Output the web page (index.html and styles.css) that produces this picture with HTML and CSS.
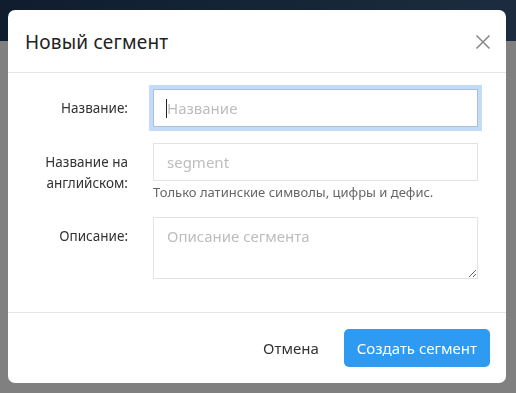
FILE: index.html
```html
<!DOCTYPE html>
<html lang="ru">
<head>
  <meta charset="UTF-8">
  <meta name="viewport" content="width=device-width, initial-scale=1.0">
  <title>Новый сегмент</title>
  <link rel="stylesheet" href="styles.css">
</head>
<body>
  <div class="topbar"></div>

  <div class="backdrop">
    <div class="modal">
      <div class="modal-header">
        <h4 class="modal-title">Новый сегмент</h4>
        <button class="close" aria-label="Закрыть">
          <svg width="16" height="16" viewBox="0 0 16 16">
            <path d="M1.5 1.5 L14.5 14.5 M14.5 1.5 L1.5 14.5" stroke="#8a8a8a" stroke-width="1.6" fill="none"/>
          </svg>
        </button>
      </div>

      <form class="modal-body">
        <label class="form-label" for="name">Название:</label>
        <div class="field">
          <div class="caret-wrap">
            <input class="form-control is-focus" id="name" type="text" placeholder="Название">
            <span class="caret"></span>
          </div>
        </div>

        <label class="form-label" for="slug">Название на английском:</label>
        <div class="field">
          <input class="form-control" id="slug" type="text" placeholder="segment">
          <div class="help">Только латинские символы, цифры и дефис.</div>
        </div>

        <label class="form-label" for="descr">Описание:</label>
        <div class="field">
          <textarea class="form-control textarea" id="descr" placeholder="Описание сегмента"></textarea>
        </div>
      </form>

      <div class="modal-footer">
        <button class="btn btn-link" type="button">Отмена</button>
        <button class="btn btn-primary" type="button">Создать сегмент</button>
      </div>
    </div>
  </div>
</body>
</html>
```

FILE: styles.css
```css
* {
  box-sizing: border-box;
}

body {
  margin: 0;
  background-color: #808080;
  font-family: "Noto Sans", "Open Sans", Arial, sans-serif;
  color: #333;
}

.topbar {
  height: 41px;
  background: linear-gradient(90deg, #0f1d2d, #1c2c3e);
}

.backdrop {
  position: fixed;
  top: 0;
  left: 0;
  right: 0;
  bottom: 0;
  padding: 10px 10px 0 8px;
}

.modal {
  width: 498px;
  height: 373px;
  background-color: #fff;
  border-radius: 7px;
  display: flex;
  flex-direction: column;
}

.modal-header {
  height: 63px;
  display: flex;
  align-items: center;
  justify-content: space-between;
  padding: 0 15px 0 17px;
  border-bottom: 1px solid #e5e5e5;
}

.modal-title {
  margin: 0;
  font-size: 19px;
  font-weight: normal;
  color: #222;
  padding-top: 2px;
  letter-spacing: 0.2px;
}

.close {
  background: none;
  border: none;
  padding: 0;
  width: 16px;
  height: 16px;
  margin-top: 2px;
  cursor: pointer;
}

.modal-body {
  flex: 1;
  margin: 0;
  padding: 16px 28px 16px 16px;
  display: grid;
  grid-template-columns: 104px 325px;
  column-gap: 25px;
  row-gap: 16px;
  align-content: start;
}

.form-label {
  text-align: right;
  font-size: 13.5px;
  line-height: 21px;
  padding-top: 9px;
  color: #333;
}

.caret-wrap {
  position: relative;
}

.form-control {
  display: block;
  width: 100%;
  height: 38px;
  padding: 7px 13px;
  font-family: inherit;
  font-size: 15px;
  color: #333;
  background-color: #fff;
  border: 1px solid #e3e3e3;
  border-radius: 0;
  outline: none;
}

.form-control::placeholder {
  color: #bdbdbd;
}

.form-control.is-focus {
  border-color: #a9bfdc;
  box-shadow: 0 0 0 4px #c4dcfa;
}

.caret {
  position: absolute;
  left: 13px;
  top: 10px;
  width: 1px;
  height: 19px;
  background-color: #222;
}

.textarea {
  height: 62px;
  resize: vertical;
  padding-top: 8px;
}

.help {
  font-size: 13px;
  color: #666;
  margin-top: 2px;
}

.modal-footer {
  height: 71px;
  border-top: 1px solid #e5e5e5;
  display: flex;
  align-items: center;
  justify-content: flex-end;
  padding: 0 16px;
  gap: 15px;
}

.btn {
  font-family: inherit;
  font-size: 15px;
  height: 38px;
  border: none;
  border-radius: 5px;
  padding: 0 14px;
  white-space: nowrap;
  cursor: pointer;
}

.btn-link {
  background: none;
  color: #333;
  padding: 0 10px;
}

.btn-primary {
  background-color: #2e9af2;
  color: #fff;
  padding: 0 13px;
}
```
